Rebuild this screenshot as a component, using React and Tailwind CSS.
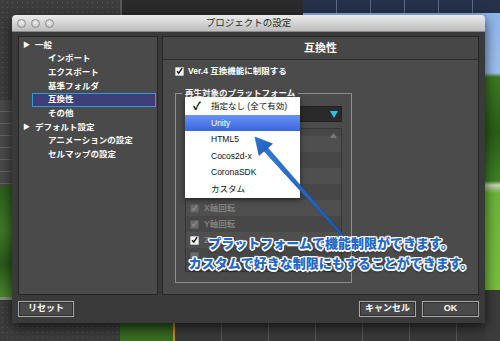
const F = "font-['Liberation_Sans','Noto_Sans_CJK_JP',sans-serif]";

function Check({ on = true, dim = false }) {
  return (
    <div
      className={
        dim
          ? "w-[9px] h-[9px] rounded-[1px] bg-[#6a6a6a] border border-[#5a5a5a] flex items-center justify-center"
          : "w-[9px] h-[9px] rounded-[1px] bg-[#f4f4f4] border border-[#bdbdbd] flex items-center justify-center"
      }
    >
      {on && (
        <svg width="8" height="8" viewBox="0 0 8 8">
          <path
            d="M1.2 4.2 L3.2 6.4 L7 0.8"
            fill="none"
            stroke={dim ? "#8a8a8a" : "#111"}
            strokeWidth="1.6"
          />
        </svg>
      )}
    </div>
  );
}

function Btn({ children, w = "w-[57px]" }) {
  return (
    <div
      className={`${w} h-[16px] border border-[#a9a9a9] bg-[#4a4a4a] shadow-[inset_0_0_0_1px_#2e2e2e] flex items-center justify-center text-white text-[9px] font-bold`}
    >
      {children}
    </div>
  );
}

export default function App() {
  const tree = [
    { t: "一般", top: true },
    { t: "インポート" },
    { t: "エクスポート" },
    { t: "基準フォルダ" },
    { t: "互換性", sel: true },
    { t: "その他" },
    { t: "デフォルト設定", top: true },
    { t: "アニメーションの設定" },
    { t: "セルマップの設定" },
  ];
  const menu = ["Unity", "HTML5", "Cocos2d-x", "CoronaSDK", "カスタム"];
  const rows = [
    { t: "", c: null },
    { t: "", c: null },
    { t: "", c: null },
    { t: "", c: null },
    { t: "X軸回転", c: "dim" },
    { t: "Y軸回転", c: "dim" },
    { t: "Z", c: "on" },
    { t: "", c: "dimoff" },
  ];
  return (
    <div
      className={`${F} relative w-[500px] h-[341px] overflow-hidden bg-[#3d3d3d] bg-[radial-gradient(circle,#565656_0.8px,transparent_1px)] [background-size:5px_5px]`}
    >
      {/* background desktop pieces */}
      <div className="absolute left-[120px] top-0 w-[2px] h-[15px] bg-[#5a5a5a]" />
      <div className="absolute left-[122px] top-0 w-[181px] h-[15px] bg-[#2b2b2b]" />
      <div className="absolute left-[303px] top-0 w-[197px] h-[13px] bg-[#26314a] bg-[repeating-linear-gradient(90deg,transparent_0,transparent_33px,#5d6a86_33px,#5d6a86_34px)]" />
      <div className="absolute left-[303px] top-[13px] w-[197px] h-[10px] bg-[#8fb6ec]" />
      <div className="absolute left-[485px] top-[13px] w-[15px] h-[277px] bg-[linear-gradient(180deg,#8fb6ec_0,#9ec0ee_60px,#3d7a22_64px,#2a5e18_120px,#3f8324_168px,#c9d7b5_172px,#6cb53a_180px,#79bf3e_276px)]" />
      <div className="absolute left-[0px] top-[100px] w-[14px] h-[86px] bg-[#4a4a4a] bg-[repeating-linear-gradient(180deg,transparent_0,transparent_11px,#666_11px,#666_12px)]" />
      <div className="absolute left-[0px] top-[186px] w-[14px] h-[112px] bg-[linear-gradient(180deg,#2f5e1e,#3e7a26_40%,#2c5a1a_70%,#4b8a2e)]" />
      <div className="absolute left-[0px] top-[297px] w-[14px] h-[3px] bg-[#8d8d7a]" />
      <div className="absolute left-[120px] top-[318px] w-[53px] h-[23px] bg-[linear-gradient(180deg,#2f5a1d,#3b6e23)]" />
      <div className="absolute left-[173px] top-[318px] w-[2px] h-[23px] bg-[#d08a1a]" />
      <div className="absolute left-[175px] top-[318px] w-[325px] h-[23px] bg-[#3a3a3a] bg-[repeating-linear-gradient(90deg,transparent_0,transparent_46px,#5a5a5a_46px,#5a5a5a_47px)]" />
      <div className="absolute left-[485px] top-[290px] w-[15px] h-[51px] bg-[#3c3c3c]" />

      {/* window */}
      <div className="absolute left-[12px] top-[15px] w-[473px] h-[308px] flex flex-col rounded-t-[4px] overflow-hidden shadow-[0_4px_14px_rgba(0,0,0,0.7)]">
        <div className="relative h-[17px] shrink-0 bg-[linear-gradient(180deg,#ececec,#cfcfcf_60%,#bdbdbd)] border-b border-[#8a8a8a] flex items-center justify-center">
          <div className="absolute left-[5px] top-[4px] flex gap-[5px]">
            <div className="w-[9px] h-[9px] rounded-full bg-[radial-gradient(circle_at_50%_35%,#f2f2f2,#b9b9b9)] border border-[#8c8c8c]" />
            <div className="w-[9px] h-[9px] rounded-full bg-[radial-gradient(circle_at_50%_35%,#f2f2f2,#b9b9b9)] border border-[#8c8c8c]" />
            <div className="w-[9px] h-[9px] rounded-full bg-[radial-gradient(circle_at_50%_35%,#f2f2f2,#b9b9b9)] border border-[#8c8c8c]" />
          </div>
          <span className="text-[9.5px] text-[#2a2a2a] leading-none">プロジェクトの設定</span>
        </div>
        <div className="flex-1 flex flex-col bg-[#3a3a3a] px-[6px] pt-[4px] pb-[6px] gap-[6px]">
          <div className="flex gap-[4px] h-[259px]">
            {/* left panel */}
            <div className="w-[140px] border border-[#262626] bg-[#4a4a4a] flex flex-col pt-[1px]">
              {tree.map((it, i) => (
                <div key={i} className="h-[13.7px] flex items-center">
                  {it.top ? (
                    <div className="flex items-center pl-[4px]">
                      <span className="text-white text-[7px] w-[12px]">▶</span>
                      <span className="text-white text-[8.5px] font-bold leading-none">{it.t}</span>
                    </div>
                  ) : it.sel ? (
                    <div className="ml-[13px] mr-[1px] flex-1 h-[14px] border border-[#2d9bd6] bg-[#3d3f7a] flex items-center pl-[15px]">
                      <span className="text-white text-[8.5px] font-bold leading-none">{it.t}</span>
                    </div>
                  ) : (
                    <span className="pl-[29px] text-white text-[8.5px] font-bold leading-none">{it.t}</span>
                  )}
                </div>
              ))}
            </div>
            {/* right panel */}
            <div className="flex-1 border border-[#262626] bg-[#4b4b4b] flex flex-col">
              <div className="h-[23px] shrink-0 bg-[#474747] border-b border-[#2c2c2c] flex items-center justify-center">
                <span className="text-white text-[11px] font-bold">互換性</span>
              </div>
              <div className="flex flex-col pl-[12px] pt-[6px]">
                <div className="flex items-center gap-[4px] h-[10px]">
                  <Check />
                  <span className="text-white text-[8.5px] font-bold leading-none">Ver.4 互換機能に制限する</span>
                </div>
                <div className="relative mt-[17px] w-[177px] h-[190px] border border-[#8e8e8e] px-[9px] pt-[12px]">
                  <span className="absolute left-[6px] top-[-7px] bg-[#4b4b4b] px-[3px] text-white text-[8.5px] font-bold leading-[12px]">
                    再生対象のプラットフォーム
                  </span>
                  <div className="h-[16px] bg-[#2a2a2a] border border-[#222] flex items-center justify-end pr-[3px]">
                    <svg width="8" height="7" viewBox="0 0 8 7">
                      <path d="M0 0 H8 L4 7 Z" fill="#29c3f0" />
                    </svg>
                  </div>
                  <div className="relative mt-[6px] h-[144px] border border-[#363636] bg-[#474747] flex flex-col pt-[7px]">
                    <svg className="absolute right-[4px] top-[4px]" width="7" height="5" viewBox="0 0 7 5">
                      <path d="M0 5 L3.5 0 L7 5 Z" fill="#7a7a7a" />
                    </svg>
                    {rows.map((r, i) => (
                      <div
                        key={i}
                        className={`h-[16px] shrink-0 flex items-center gap-[5px] pl-[4px] ${i % 2 === 0 ? "bg-[#4f4f4f]" : "bg-[#474747]"}`}
                      >
                        {r.c === "dim" && <Check dim />}
                        {r.c === "on" && <Check />}
                        {r.c === "dimoff" && <Check dim on={false} />}
                        {r.t && (
                          <span className="text-[#7f7f7f] text-[8.5px] font-bold leading-none">{r.t}</span>
                        )}
                      </div>
                    ))}
                  </div>
                </div>
              </div>
            </div>
          </div>
          <div className="flex justify-between">
            <Btn w="w-[56px]">リセット</Btn>
            <div className="flex gap-[6px]">
              <Btn>キャンセル</Btn>
              <Btn>OK</Btn>
            </div>
          </div>
        </div>
      </div>

      {/* popup menu */}
      <div className="absolute left-[185px] top-[97px] w-[115px] bg-white shadow-[0_2px_6px_rgba(0,0,0,0.5)] pt-[1px] pb-[1px] flex flex-col">
        <div className="h-[16.5px] flex items-center">
          <span className="w-[26px] pl-[8px] text-black text-[11px] font-bold leading-none">✓</span>
          <span className="text-[#111] text-[8.5px] leading-none">指定なし (全て有効)</span>
        </div>
        {menu.map((m, i) => (
          <div
            key={m}
            className={`h-[16.5px] flex items-center pl-[26px] ${i === 0 ? "bg-[linear-gradient(180deg,#6792f2,#3a66e0)] text-white" : "text-[#111]"}`}
          >
            <span className="text-[8.5px] leading-none">{m}</span>
          </div>
        ))}
      </div>

      {/* arrow */}
      <svg className="absolute left-0 top-0 pointer-events-none" width="500" height="341" viewBox="0 0 500 341">
        <defs>
          <linearGradient id="ag" x1="0" y1="0" x2="1" y2="1">
            <stop offset="0" stopColor="#2f78d8" />
            <stop offset="1" stopColor="#1d56b2" />
          </linearGradient>
        </defs>
        <polygon
          points="343.8,235.3 342.2,236.7 263.7,150.7 267.5,147.4"
          fill="url(#ag)"
          stroke="#174a9a"
          strokeWidth="0.5"
        />
        <polygon
          points="255,137 272.5,143.8 259,155.5"
          fill="url(#ag)"
          stroke="#174a9a"
          strokeWidth="0.5"
        />
      </svg>

      {/* annotation */}
      <div className="absolute left-[181px] top-[233px] w-[300px] text-center font-['Noto_Sans_CJK_JP',sans-serif] font-black text-[13px] leading-[20px] text-[#2467c6] [text-shadow:1.5px_0_0_#fff,-1.5px_0_0_#fff,0_1.5px_0_#fff,0_-1.5px_0_#fff,1.1px_1.1px_0_#fff,-1.1px_-1.1px_0_#fff,1.1px_-1.1px_0_#fff,-1.1px_1.1px_0_#fff,0_2px_3px_rgba(0,0,0,0.7)]">
        <div>プラットフォームで機能制限ができます。</div>
        <div>カスタムで好きな制限にもすることができます。</div>
      </div>
    </div>
  );
}
